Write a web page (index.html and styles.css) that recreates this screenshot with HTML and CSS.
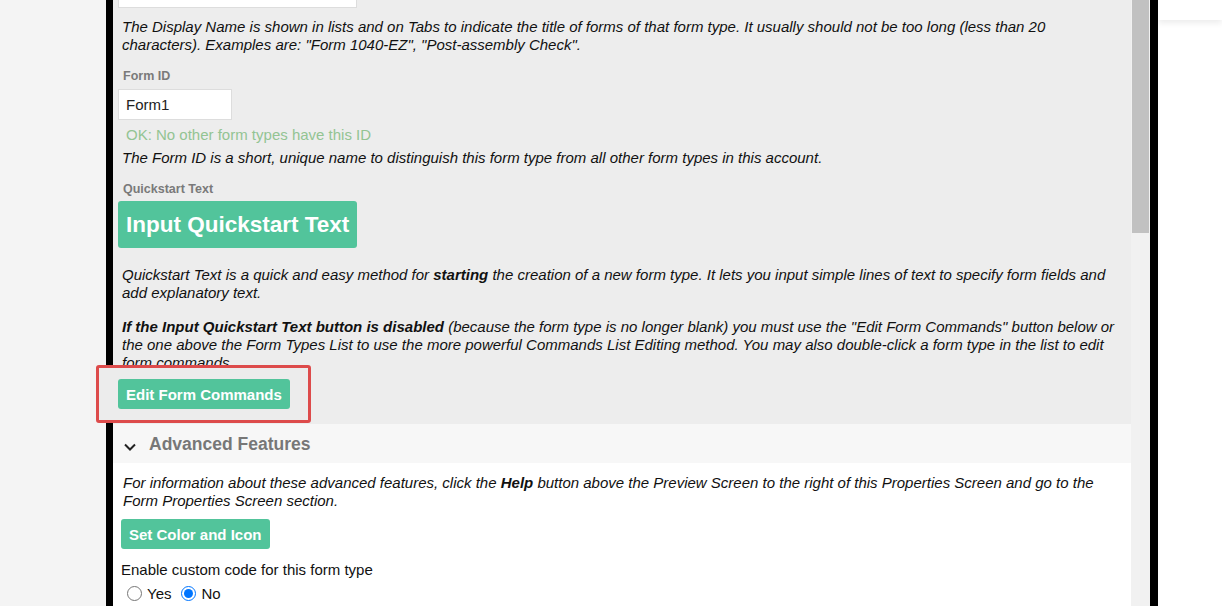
FILE: index.html
```html
<!DOCTYPE html>
<html lang="en">
<head>
<meta charset="UTF-8">
<meta name="viewport" content="width=device-width, initial-scale=1.0">
<title>Form Properties</title>
<link rel="stylesheet" href="styles.css">
</head>
<body>
<div class="page">
  <div class="gutter"></div>
  <div class="frame">
    <div class="props">
      <div class="basic">
        <div class="input display-name"></div>
        <p class="help">The Display Name is shown in lists and on Tabs to indicate the title of forms of that form type. It usually should not be too long (less than 20 characters). Examples are: "Form 1040-EZ", "Post-assembly Check".</p>
        <div class="field-label">Form ID</div>
        <div class="input form-id">Form1</div>
        <div class="ok-msg">OK: No other form types have this ID</div>
        <p class="help tight">The Form ID is a short, unique name to distinguish this form type from all other form types in this account.</p>
        <div class="field-label">Quickstart Text</div>
        <button class="btn btn-big">Input Quickstart Text</button>
        <p class="help para">Quickstart Text is a quick and easy method for <b>starting</b> the creation of a new form type. It lets you input simple lines of text to specify form fields and add explanatory text.</p>
        <p class="help para2"><b>If the Input Quickstart Text button is disabled</b> (because the form type is no longer blank) you must use the "Edit Form Commands" button below or the one above the Form Types List to use the more powerful Commands List Editing method. You may also double-click a form type in the list to edit form commands.</p>
        <div class="cmd-row">
          <button class="btn">Edit Form Commands</button>
        </div>
      </div>
      <div class="advanced">
        <div class="adv-head">
          <svg class="chevron" width="12" height="8" viewBox="0 0 12 8"><path d="M1 1.5 L6 6.5 L11 1.5" fill="none" stroke="#222" stroke-width="2"/></svg>
          <span>Advanced Features</span>
        </div>
        <div class="adv-body">
          <p class="help">For information about these advanced features, click the <b>Help</b> button above the Preview Screen to the right of this Properties Screen and go to the Form Properties Screen section.</p>
          <button class="btn">Set Color and Icon</button>
          <div class="plain">Enable custom code for this form type</div>
          <div class="radios">
            <label><input type="radio" name="custom"> Yes</label>
            <label><input type="radio" name="custom" checked> No</label>
          </div>
        </div>
      </div>
    </div>
    <div class="scrollbar"><div class="thumb"></div></div>
  </div>
  <div class="side">
    <div class="side-card"></div>
  </div>
</div>
</body>
</html>
```

FILE: styles.css
```css
body {
  margin: 0;
  height: 606px;
  overflow: hidden;
  font-family: "Liberation Sans", Arial, sans-serif;
  background-color: #f4f4f4;
}

.page {
  display: flex;
  height: 606px;
}

.gutter {
  width: 106px;
  flex-shrink: 0;
}

.frame {
  display: flex;
  width: 1037px;
  border-left: 7px solid #000;
  border-right: 8px solid #000;
  background-color: #fff;
}

.props {
  flex: 1;
}

.scrollbar {
  width: 19px;
  background-color: #f1f1f1;
  padding: 0 1px;
  box-sizing: border-box;
}

.thumb {
  height: 233px;
  background-color: #c1c1c1;
}

.side {
  flex: 1;
  background-color: #fff;
}

.side-card {
  height: 20px;
  background-color: #fff;
  box-shadow: 0 3px 6px rgba(0, 0, 0, 0.08);
}

/* basic properties */
.basic {
  background-color: #ededed;
  padding: 0 5px 15px;
}

.input {
  background-color: #fff;
  border: 1px solid #ddd;
  box-sizing: border-box;
  font-size: 15px;
  color: #222;
}

.display-name {
  width: 239px;
  height: 31px;
  margin-top: -23px;
}

.form-id {
  width: 114px;
  height: 31px;
  margin-top: 6px;
  padding: 6px 7px;
}

.help {
  font-style: italic;
  font-size: 15px;
  line-height: 18px;
  color: #111;
  margin: 10px 0 0 4px;
}

.help b {
  font-weight: bold;
}

.help.tight {
  margin-top: 5px;
}

.help.para {
  margin-top: 18px;
}

.help.para2 {
  margin-top: 16px;
  margin-bottom: 0;
}

.field-label {
  font-size: 12.5px;
  line-height: 14px;
  font-weight: bold;
  color: #7a7a7a;
  margin: 15px 0 0 5px;
}

.ok-msg {
  font-size: 15px;
  line-height: 18px;
  color: #93c493;
  margin: 6px 0 0 8px;
}

.btn {
  display: block;
  font-family: "Liberation Sans", Arial, sans-serif;
  font-weight: bold;
  font-size: 15px;
  color: #fff;
  background-color: #52c49b;
  border: none;
  border-radius: 3px;
  height: 30px;
  padding: 0 8px;
  position: relative;
  z-index: 1;
}

.btn-big {
  font-size: 22.5px;
  height: 47px;
  margin-top: 5px;
}

.cmd-row {
  position: relative;
  margin-top: 7px;
}

.cmd-row::before {
  content: "";
  position: absolute;
  left: -22px;
  top: -14px;
  width: 215px;
  height: 58px;
  box-sizing: border-box;
  border: 3px solid #dd4b4b;
  border-radius: 3px;
  background-color: #ececec;
}

/* advanced features */
.adv-head {
  display: flex;
  align-items: center;
  height: 39px;
  box-sizing: border-box;
  padding-top: 2px;
  background-color: #f7f7f7;
  padding-left: 11px;
  font-size: 17.5px;
  font-weight: bold;
  color: #777;
}

.chevron {
  margin-right: 13px;
  margin-top: 4px;
}

.adv-body {
  padding: 0 8px;
}

.adv-body .help {
  margin: 11px 0 0 2px;
}

.adv-body .btn {
  margin-top: 9px;
}

.plain {
  font-size: 15px;
  line-height: 18px;
  color: #111;
  margin-top: 12px;
}

.radios {
  display: flex;
  gap: 8px;
  margin-top: 6px;
  margin-left: 4px;
  font-size: 15px;
  color: #111;
}

.radios label {
  display: flex;
  align-items: center;
}

.radios input {
  margin: 0 5px 0 2px;
  width: 15px;
  height: 15px;
}
```
